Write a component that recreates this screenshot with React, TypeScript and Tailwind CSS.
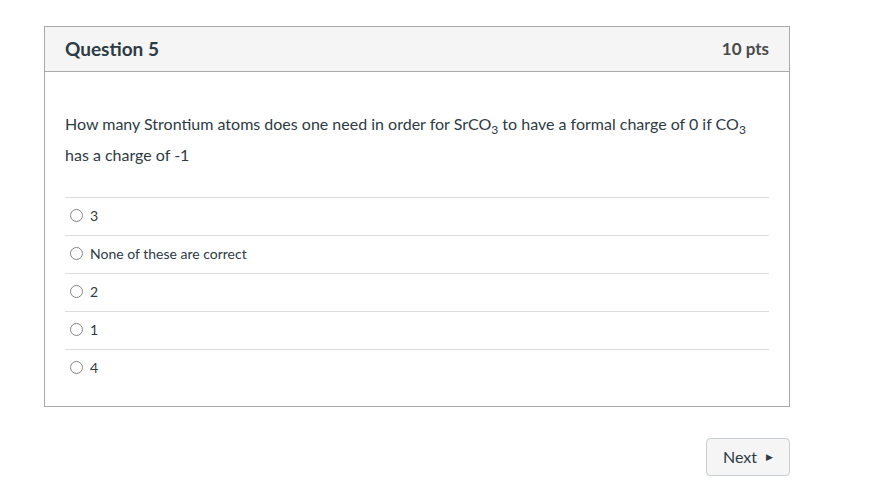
import React from 'react';

const answers = ['3', 'None of these are correct', '2', '1', '4'];

const App: React.FC = () => {
  return (
    <div className="min-h-screen bg-white text-[#2d3b45]" style={{ fontFamily: 'Lato, "Noto Sans", sans-serif' }}>
      <div className="pt-[26px] pl-[44px] w-[790px]">
        <div className="border border-[#aaaaaa]">
          <div className="h-[45px] bg-[#f5f5f5] border-b border-[#aaaaaa] flex items-center justify-between px-5">
            <h2 className="text-[19px] font-bold">Question 5</h2>
            <span className="text-[17px] font-bold text-[#4a4a4a]">10 pts</span>
          </div>
          <div className="px-5 pb-[19px]">
            <p className="pt-[36px] text-[16px] leading-[31px] pb-[27px]">
              How many Strontium atoms does one need in order for SrCO
              <span className="relative top-[4px] text-[12px] leading-none">3</span> to have a formal charge of 0 if CO
              <span className="relative top-[4px] text-[12px] leading-none">3</span>
              <br />
              has a charge of -1
            </p>
            <div>
              {answers.map((a, i) => (
                <label key={i} className="h-[38px] pb-[3px] border-t border-[#dddddd] flex items-center pl-[5px] gap-[7px] text-[14px]">
                  <span className="w-[13px] h-[13px] rounded-full border border-[#858585] bg-white" />
                  <span>{a}</span>
                </label>
              ))}
            </div>
          </div>
        </div>
        <div className="flex justify-end mt-[31px]">
          <button className="h-[38px] w-[84px] pb-[1px] rounded-[4px] border border-[#c7cdd1] bg-[#f5f5f5] flex items-center justify-center gap-[9px] text-[16px] text-[#2d3b45]">
            Next
            <span className="text-[9px]">▶</span>
          </button>
        </div>
      </div>
    </div>
  );
};

export default App;
